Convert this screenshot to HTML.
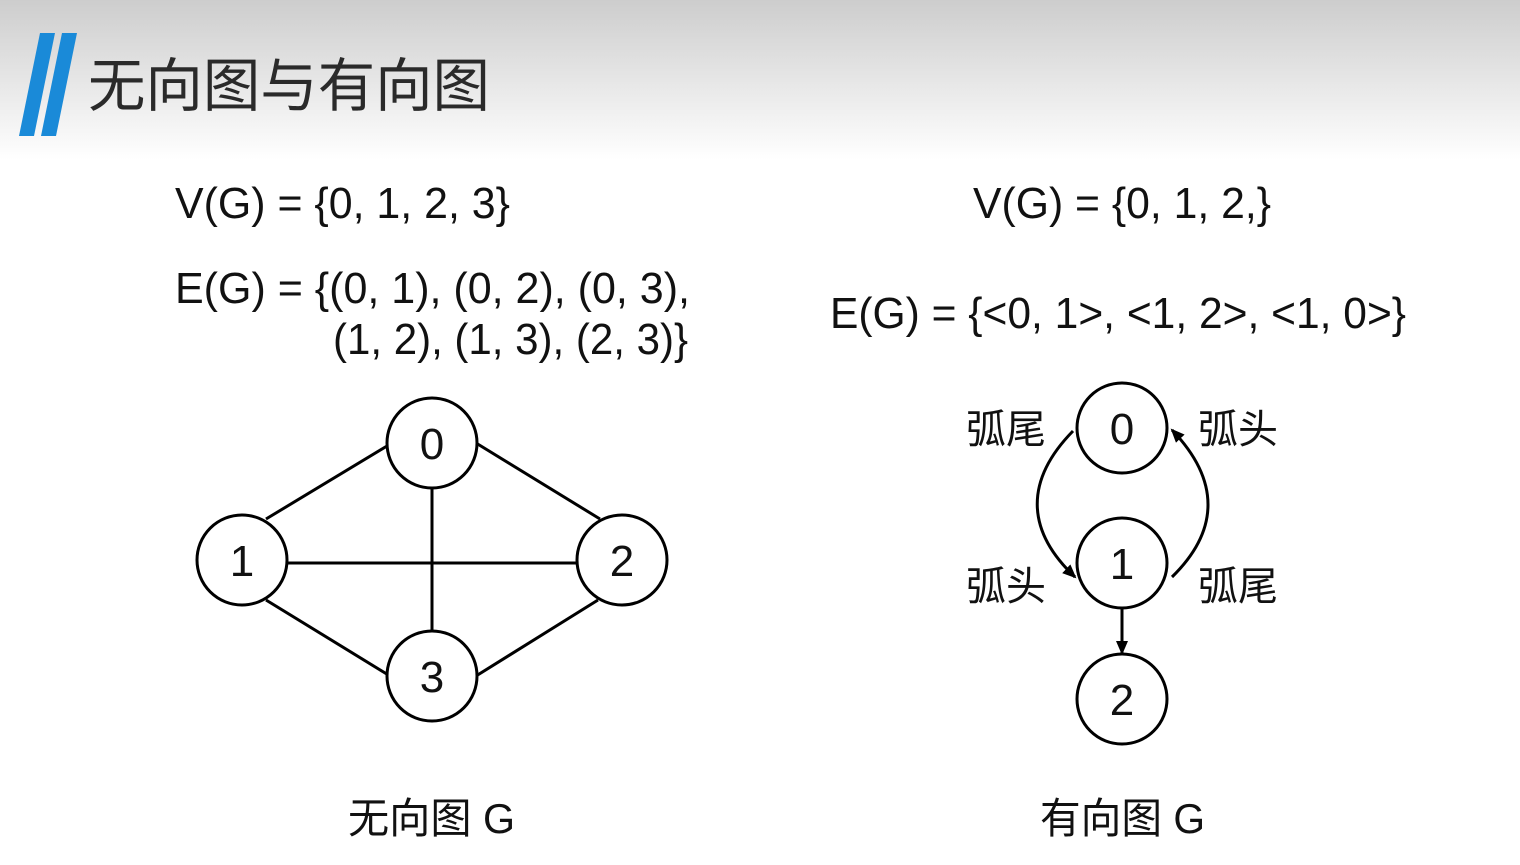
<!DOCTYPE html>
<html><head><meta charset="utf-8"><style>
html,body{margin:0;padding:0;width:1520px;height:865px;overflow:hidden;background:#fff}
.hdr{position:absolute;left:0;top:0;width:1520px;height:160px;background:linear-gradient(#cdcdcd,#fff)}
svg{position:absolute;left:0;top:0}
text{font-family:"Liberation Sans","Noto Sans CJK SC",sans-serif;fill:#111}
</style></head><body>
<div class="hdr"></div>
<svg width="1520" height="865" viewBox="0 0 1520 865">
<defs><marker id="ar" markerWidth="14" markerHeight="12" refX="12" refY="6" orient="auto" markerUnits="userSpaceOnUse"><path d="M0,0 L14,6 L0,12 Z" fill="#000"/></marker></defs>
<polygon points="40,33 55,33 34,136 19,136" fill="#1a8ad8"/>
<polygon points="62,33 77,33 56,136 41,136" fill="#1a8ad8"/>
<text x="88" y="106" font-size="58" textLength="402" lengthAdjust="spacingAndGlyphs" style="fill:#2a2a2a;font-family:'Noto Sans CJK SC',sans-serif">无向图与有向图</text>
<g font-size="44">
<text x="175" y="218" textLength="335" lengthAdjust="spacingAndGlyphs">V(G) = {0, 1, 2, 3}</text>
<text x="175" y="303" textLength="515" lengthAdjust="spacingAndGlyphs">E(G) = {(0, 1), (0, 2), (0, 3),</text>
<text x="333" y="354" textLength="355" lengthAdjust="spacingAndGlyphs">(1, 2), (1, 3), (2, 3)}</text>
<text x="973" y="218" textLength="298" lengthAdjust="spacingAndGlyphs">V(G) = {0, 1, 2,}</text>
<text x="830" y="328" textLength="576" lengthAdjust="spacingAndGlyphs">E(G) = {&lt;0, 1&gt;, &lt;1, 2&gt;, &lt;1, 0&gt;}</text>
</g>
<g stroke="#000" stroke-width="3" fill="none">
<line x1="266" y1="519" x2="392" y2="443"/>
<line x1="476" y1="443" x2="600" y2="519"/>
<line x1="287" y1="563" x2="577" y2="563"/>
<line x1="432" y1="488" x2="432" y2="631"/>
<line x1="266" y1="600" x2="390" y2="676"/>
<line x1="476" y1="676" x2="598" y2="600"/>
<circle cx="432" cy="443" r="45" fill="#fff"/>
<circle cx="242" cy="560" r="45" fill="#fff"/>
<circle cx="622" cy="560" r="45" fill="#fff"/>
<circle cx="432" cy="676" r="45" fill="#fff"/>
<circle cx="1122" cy="428" r="45"/>
<circle cx="1122" cy="563" r="45"/>
<circle cx="1122" cy="699" r="45"/>
<path d="M1073,431 C1025,480 1025,530 1075,577" marker-end="url(#ar)"/>
<path d="M1172,577 C1220,530 1220,480 1172,430" marker-end="url(#ar)"/>
<line x1="1122" y1="608" x2="1122" y2="653" marker-end="url(#ar)"/>
</g>
<g font-size="44" text-anchor="middle">
<text x="432" y="459">0</text>
<text x="242" y="576">1</text>
<text x="622" y="576">2</text>
<text x="432" y="692">3</text>
<text x="1122" y="444">0</text>
<text x="1122" y="579">1</text>
<text x="1122" y="715">2</text>
</g>
<g font-size="40" style="font-family:'Noto Sans CJK SC',sans-serif">
<text x="966" y="443">弧尾</text>
<text x="1198" y="443">弧头</text>
<text x="966" y="600">弧头</text>
<text x="1198" y="600">弧尾</text>
</g>
<g font-size="42">
<text x="348" y="833" textLength="167" lengthAdjust="spacingAndGlyphs"><tspan style="font-family:'Noto Sans CJK SC',sans-serif">无向图</tspan> G</text>
<text x="1040" y="833" textLength="165" lengthAdjust="spacingAndGlyphs"><tspan style="font-family:'Noto Sans CJK SC',sans-serif">有向图</tspan> G</text>
</g>
</svg>
</body></html>
